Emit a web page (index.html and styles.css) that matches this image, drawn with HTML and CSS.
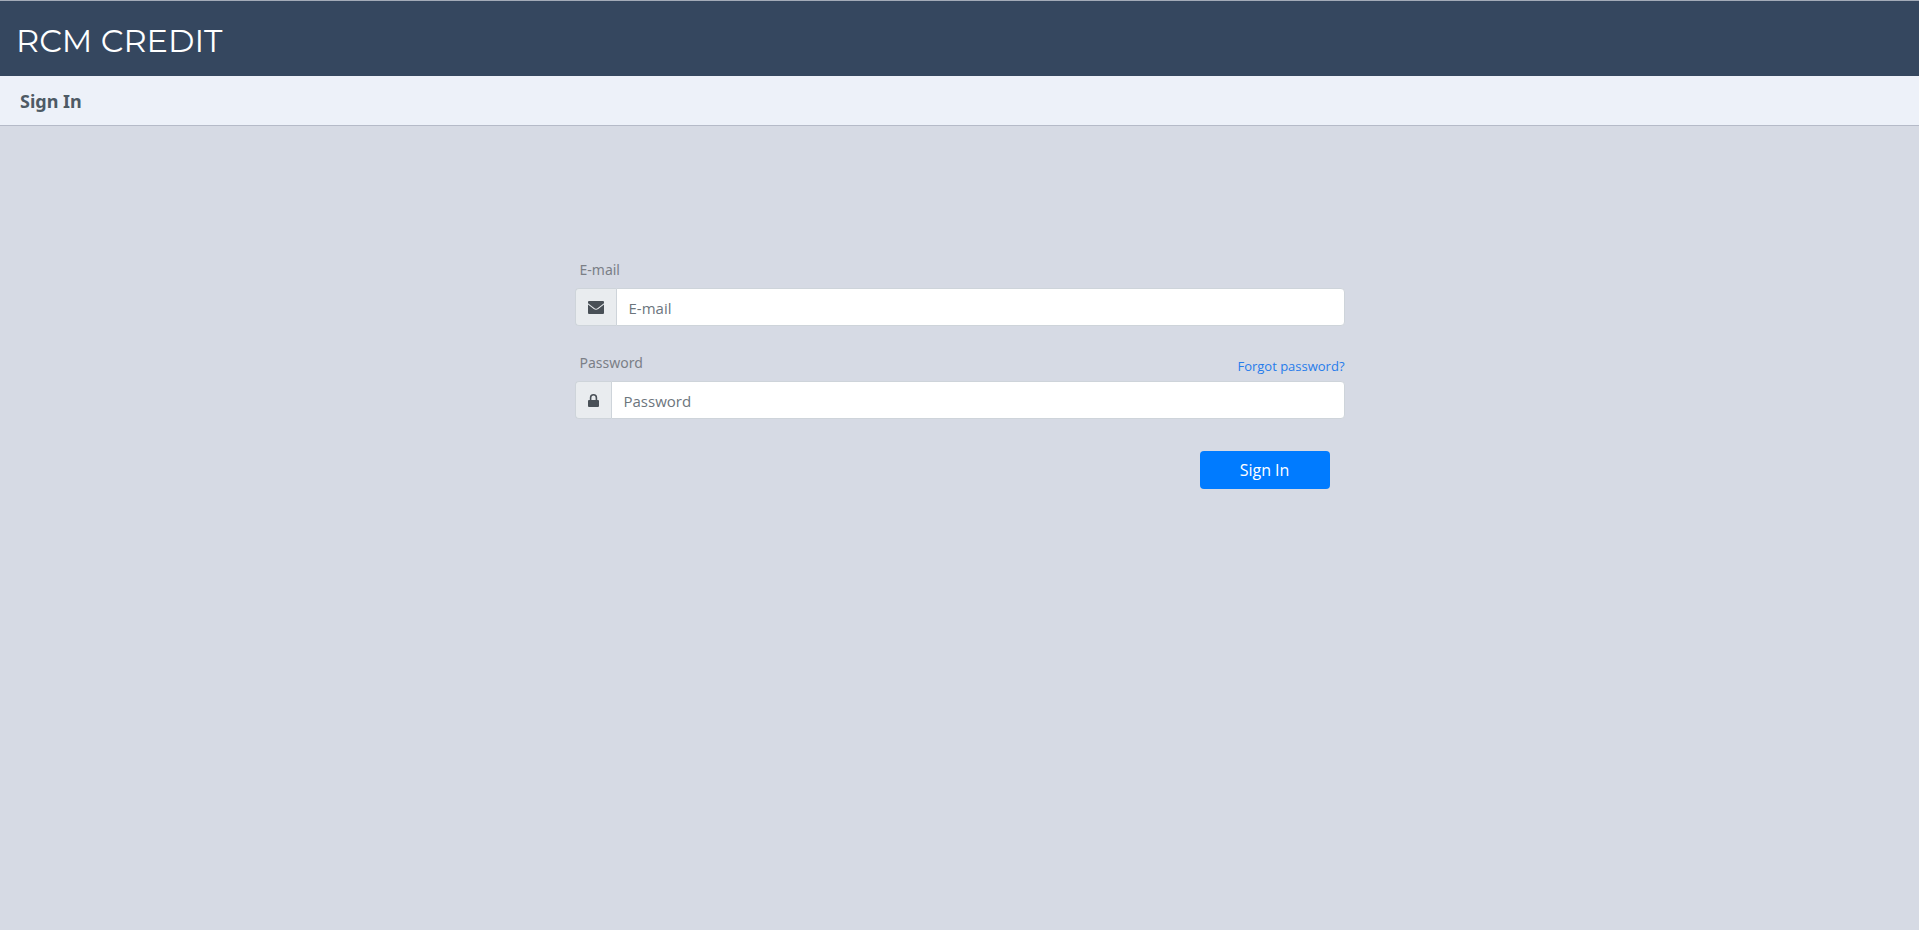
FILE: index.html
```html
<!DOCTYPE html>
<html lang="en">
<head>
<meta charset="utf-8">
<title>RCM Credit - Sign In</title>
<link rel="stylesheet" href="styles.css">
</head>
<body>
<header class="topbar"><span class="brand">RCM CREDIT</span></header>
<div class="subbar"><h1 class="page-title">Sign In</h1></div>
<main class="content">
  <form class="login">
    <div class="field">
      <div class="field-head"><label class="label" for="email">E-mail</label></div>
      <div class="group">
        <span class="addon"><svg class="icon-mail" viewBox="0 0 16 13" aria-hidden="true"><path d="M1 0h14a1 1 0 0 1 1 1v1.200L9.500 7.200Q8 8.300 6.500 7.200L0 2.200V1a1 1 0 0 1 1-1z"/><path d="M0 3.400L5.800 8Q8 9.600 10.200 8L16 3.400V12a1 1 0 0 1-1 1H1a1 1 0 0 1-1-1z"/></svg></span>
        <input class="input" id="email" type="email" placeholder="E-mail">
      </div>
    </div>
    <div class="field">
      <div class="field-head"><label class="label" for="password">Password</label><a class="forgot" href="#">Forgot password?</a></div>
      <div class="group">
        <span class="addon"><svg class="icon-lock" viewBox="0 0 11 13" aria-hidden="true"><path d="M1 6h.8V3.700a3.700 3.700 0 0 1 7.400 0V6h.8a1 1 0 0 1 1 1v5a1 1 0 0 1-1 1H1a1 1 0 0 1-1-1V7a1 1 0 0 1 1-1zm2.400 0h4.200V3.700a2.100 2.100 0 0 0-4.200 0z"/></svg></span>
        <input class="input" id="password" type="password" placeholder="Password">
      </div>
    </div>
    <div class="actions"><button class="submit" type="submit">Sign In</button></div>
  </form>
</main>
</body>
</html>
```
FILE: styles.css
```css
* { box-sizing: border-box; }
body {
  margin: 0;
  min-height: 100vh;
  background: #d6dae4;
  color: #495057;
  font-family: "Noto Sans", "Open Sans", sans-serif;
  font-size: 16px;
}
.topbar {
  display: flex;
  align-items: center;
  height: 76px;
  padding: 4px 16px 0;
  border-top: 1px solid #a3abb8;
  background: #35475f;
}
.brand {
  color: #fff;
  font-family: Montserrat, Inter, sans-serif;
  font-size: 32px;
  font-weight: 400;
  line-height: 40px;
}
.subbar {
  display: flex;
  align-items: center;
  height: 50px;
  padding: 0 20px;
  border-bottom: 1px solid #b5bac8;
  background: #edf1f9;
}
.page-title {
  margin: 0;
  color: #4e5a65;
  font-size: 18px;
  font-weight: 700;
  line-height: 24px;
}
.content {
  display: flex;
  justify-content: center;
  padding: 129px 16px 0;
}
.login { width: 100%; max-width: 770px; }
.field { margin-bottom: 22px; }
.field-head {
  display: flex;
  justify-content: space-between;
  height: 33px;
  padding-left: 5px;
}
.label {
  color: #7b7f87;
  font-size: 14px;
  line-height: 30px;
}
.forgot {
  color: #277ceb;
  font-family: "Segoe UI", "Open Sans", sans-serif;
  font-size: 13px;
  line-height: 36px;
  text-decoration: none;
}
.group { display: flex; height: 38px; }
.addon {
  display: flex;
  align-items: center;
  padding: 0 12px;
  border: 1px solid #ced4da;
  border-right: 0;
  border-radius: 4px 0 0 4px;
  background: #e9ecef;
}
.icon-mail { width: 16px; height: 13px; fill: #495057; }
.icon-lock { width: 11px; height: 13px; fill: #495057; }
.input {
  flex: 1;
  min-width: 0;
  padding: 2px 12px 0;
  border: 1px solid #ced4da;
  border-radius: 0 4px 4px 0;
  background: #fff;
  color: #495057;
  font-family: "Segoe UI", "Open Sans", sans-serif;
  font-size: 15px;
}
.input::placeholder { color: #6c757d; opacity: 1; }
.actions {
  display: flex;
  justify-content: flex-end;
  padding: 10px 15px 0;
}
.submit {
  width: 130px;
  height: 38px;
  padding: 0;
  border: 0;
  border-radius: 4px;
  background: #007bff;
  color: #fff;
  font-family: "Segoe UI", "Open Sans", sans-serif;
  font-size: 16px;
  cursor: pointer;
}
```
